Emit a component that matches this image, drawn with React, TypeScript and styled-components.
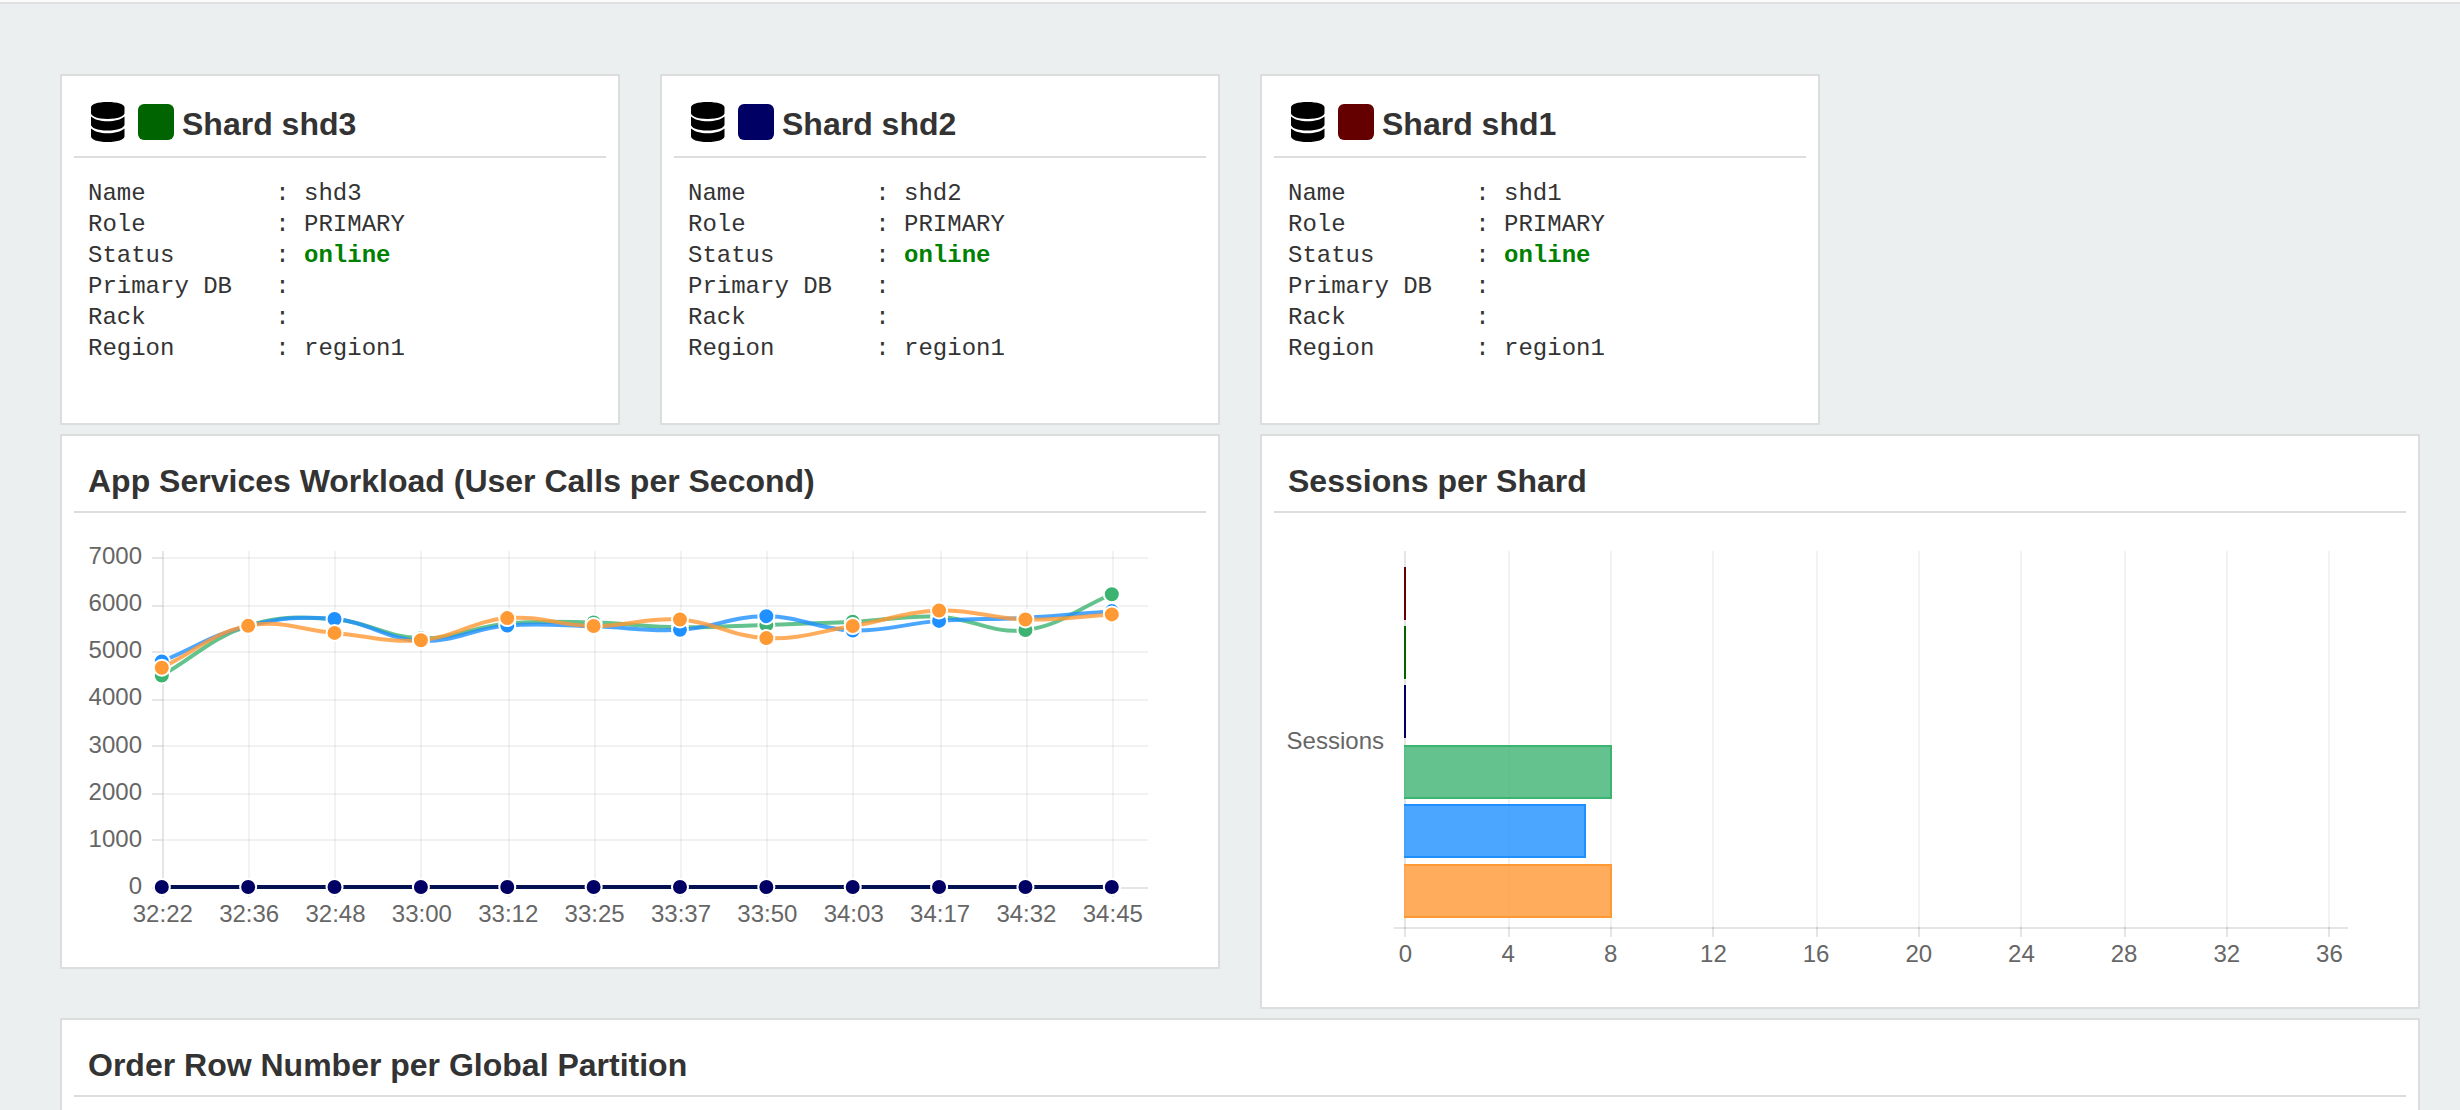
import React from "react";
import styled, { createGlobalStyle } from "styled-components";

const SANS = '"Liberation Sans", Arial, Helvetica, sans-serif';
const MONO = '"Liberation Mono", "Courier New", Courier, monospace';

const GlobalStyle = createGlobalStyle`
  *, *::before, *::after { box-sizing: border-box; }
  body { margin: 0; background: #ebeff0; color: #333; font-family: ${SANS}; }
`;

const Page = styled.div`
  height: 100vh;
  overflow-y: auto;
  scrollbar-width: none;
`;

const TopBar = styled.header`
  height: 4px;
  background: #fcfafa;
  border-bottom: 2px solid #e0e0e0;
`;

const Dashboard = styled.main`
  display: grid;
  grid-template-columns: repeat(4, minmax(0, 1fr));
  column-gap: 40px;
  row-gap: 9px;
  align-items: start;
  padding: 70px 40px 40px 60px;
`;

const Card = styled.section<{ $span: number; $newRow?: boolean }>`
  grid-column: ${(p) => (p.$newRow ? "1 / " : "")}span ${(p) => p.$span};
  padding: 12px;
  background: #fff;
  border: 2px solid #ddd;
`;

const CardHeader = styled.div<{ $tall?: boolean }>`
  display: flex;
  align-items: center;
  gap: 8px;
  height: ${(p) => (p.$tall ? 70 : 65)}px;
  padding: 0 14px;
  border-bottom: 2px solid #ddd;
`;

const Title = styled.h2`
  margin: 0;
  padding-top: 3px;
  font-size: 32px;
  line-height: 36px;
  font-weight: 700;
`;

const DbIcon = styled.svg`
  width: 40px;
  height: 40px;
  margin-right: 2px;
  fill: #000;
`;

const Swatch = styled.span<{ $color: string }>`
  width: 36px;
  height: 36px;
  border-radius: 6px;
  background: ${(p) => p.$color};
`;

const Details = styled.dl`
  margin: 20px 14px 47px;
  font-family: ${MONO};
  font-size: 24px;
  line-height: 31px;
`;

const DetailRow = styled.div`
  display: grid;
  grid-template-columns: 13ch 2ch 1fr;
  min-height: 31px;

  dd { margin: 0; }
`;

const Online = styled.strong`
  color: #008000;
`;

const Chart = styled.svg`
  display: block;
  width: 100%;
  height: auto;

  text {
    font-family: ${SANS};
    font-size: 24px;
    fill: #666;
  }
`;

const EmptyBody = styled.div`
  height: 442px;
`;

type Shard = { name: string; color: string };

const shards: Shard[] = [
  { name: "shd3", color: "#006400" },
  { name: "shd2", color: "#000064" },
  { name: "shd1", color: "#640000" },
];

function DatabaseIcon() {
  return (
    <DbIcon viewBox="0 0 40 40" aria-hidden="true">
      <path d="M3 5.500C3 2.200 9.500 0 19.500 0S36.500 2.200 36.500 5.500V11c0 3.400-6.800 5.900-17 5.900S3 14.400 3 11z" />
      <path d="M3 14.600c3.500 3.200 9.500 4.700 16.500 4.700s13.500-1.500 17-4.700v8c0 3.400-6.800 6-17 6S3 26 3 22.600z" />
      <path d="M3 26.500c3.500 3.200 9.500 4.700 16.500 4.700s13.500-1.500 17-4.700v7.700c0 3.400-6.800 5.800-17 5.800S3 37.600 3 34.200z" />
    </DbIcon>
  );
}

function ShardCard({ name, color }: Shard) {
  const rows: [string, React.ReactNode][] = [
    ["Name", name],
    ["Role", "PRIMARY"],
    ["Status", <Online>online</Online>],
    ["Primary DB", ""],
    ["Rack", ""],
    ["Region", "region1"],
  ];
  return (
    <Card $span={1}>
      <CardHeader $tall>
        <DatabaseIcon />
        <Swatch $color={color} />
        <Title>Shard {name}</Title>
      </CardHeader>
      <Details>
        {rows.map(([label, value]) => (
          <DetailRow key={label}>
            <dt>{label}</dt>
            <span>:</span>
            <dd>{value}</dd>
          </DetailRow>
        ))}
      </Details>
    </Card>
  );
}

type Point = { x: number; y: number };

/* Cubic spline through the points; tension 0.4, weighted by segment length. */
function splinePath(pts: Point[]) {
  const t = 0.4;
  const handles = pts.map((cur, i) => {
    const prev = pts[i - 1] ?? cur;
    const next = pts[i + 1] ?? cur;
    const a = Math.hypot(cur.x - prev.x, cur.y - prev.y);
    const b = Math.hypot(next.x - cur.x, next.y - cur.y);
    const fa = (t * a) / (a + b);
    const fb = (t * b) / (a + b);
    return {
      inX: cur.x - fa * (next.x - prev.x),
      inY: cur.y - fa * (next.y - prev.y),
      outX: cur.x + fb * (next.x - prev.x),
      outY: cur.y + fb * (next.y - prev.y),
    };
  });
  return pts
    .map((p, i) => {
      if (i === 0) return `M${p.x} ${p.y}`;
      const o = handles[i - 1];
      const n = handles[i];
      return `C${o.outX} ${o.outY} ${n.inX} ${n.inY} ${p.x} ${p.y}`;
    })
    .join("");
}

/* Centre of a 2px grid line, so that its edges fall on even pixels. */
const gridLine = (v: number) => 2 * Math.ceil((v - 1) / 2) + 1;

const times = ["32:22", "32:36", "32:48", "33:00", "33:12", "33:25", "33:37", "33:50", "34:03", "34:17", "34:32", "34:45"];
const zeros = times.map(() => 0);

const workload = [
  { color: "#640000", values: zeros },
  { color: "#006400", values: zeros },
  { color: "#000064", values: zeros },
  { color: "#3cb371", values: [4486, 5540, 5680, 5275, 5590, 5610, 5510, 5560, 5625, 5735, 5450, 6210] },
  { color: "#1e90ff", values: [4785, 5540, 5684, 5222, 5545, 5530, 5455, 5745, 5441, 5645, 5710, 5852] },
  { color: "#ff9933", values: [4652, 5540, 5390, 5235, 5704, 5535, 5675, 5280, 5535, 5865, 5675, 5782] },
];

function WorkloadChart() {
  const x = (i: number) => 87.8 + (i * 950) / 11;
  const y = (v: number) => 374 - (v * 330) / 7000;
  return (
    <Chart viewBox="0 0 1132 442" role="img" aria-label="User calls per second for each app service">
      {times.map((label, i) => {
        const gx = gridLine(x(i));
        return (
          <g key={label}>
            <path d={`M${gx} 38V374`} stroke="#000" strokeWidth={2} strokeOpacity={i ? 0.05 : 0.1} />
            <path d={`M${gx} 374V384`} stroke="#000" strokeWidth={2} strokeOpacity={0.1} />
            <text x={x(i) + 1} y={409} textAnchor="middle">{label}</text>
          </g>
        );
      })}
      {[0, 1000, 2000, 3000, 4000, 5000, 6000, 7000].map((v) => {
        const gy = gridLine(y(v));
        return (
          <g key={v}>
            <path d={`M78 ${gy}H88`} stroke="#000" strokeWidth={2} strokeOpacity={0.1} />
            <path d={`M88 ${gy}H1074`} stroke="#000" strokeWidth={2} strokeOpacity={v ? 0.05 : 0.1} />
            <text x={68} y={y(v) + 7} textAnchor="end">{v}</text>
          </g>
        );
      })}
      {workload.map(({ color, values }) => {
        const pts = values.map((v, i) => ({ x: x(i), y: y(v) }));
        return (
          <g key={color}>
            <path d={splinePath(pts)} fill="none" stroke={color} strokeOpacity={0.8} strokeWidth={4} />
            {pts.map((p) => (
              <circle key={p.x} cx={p.x} cy={p.y} r={8} fill={color} stroke="#fff" strokeWidth={2} />
            ))}
          </g>
        );
      })}
    </Chart>
  );
}

const sessions = [
  { color: "#640000", value: 0 },
  { color: "#006400", value: 0 },
  { color: "#000064", value: 0 },
  { color: "#3cb371", value: 8 },
  { color: "#1e90ff", value: 7 },
  { color: "#ff9933", value: 8 },
];

function SessionsChart() {
  const x = (v: number) => 130.4 + (v * 924) / 36;
  return (
    <Chart viewBox="0 0 1132 482" role="img" aria-label="Number of sessions for each shard">
      {[0, 4, 8, 12, 16, 20, 24, 28, 32, 36].map((v) => {
        const gx = gridLine(x(v));
        return (
          <g key={v}>
            <path d={`M${gx} 38V414`} stroke="#000" strokeWidth={2} strokeOpacity={v ? 0.05 : 0.1} />
            <path d={`M${gx} 414V424`} stroke="#000" strokeWidth={2} strokeOpacity={0.1} />
            <text x={x(v) + 1} y={449} textAnchor="middle">{v}</text>
          </g>
        );
      })}
      <path d="M120 415H1074" stroke="#000" strokeWidth={2} strokeOpacity={0.1} />
      <text x={110} y={236} textAnchor="end">Sessions</text>
      {sessions.map(({ color, value }, i) => {
        const top = 54 + Math.floor((i * 297) / 5);
        const right = Math.round(x(value));
        return value === 0 ? (
          <path key={color} d={`M131 ${top}v53`} stroke={color} strokeWidth={2} />
        ) : (
          <g key={color}>
            <rect x={130} y={top} width={right - 130 + 2} height={54} fill={color} fillOpacity={0.8} />
            <path d={`M130 ${top + 1}H${right + 1}v52H130`} fill="none" stroke={color} strokeWidth={2} />
          </g>
        );
      })}
    </Chart>
  );
}

export default function App() {
  return (
    <Page>
      <GlobalStyle />
      <TopBar />
      <Dashboard>
        {shards.map((s) => (
          <ShardCard key={s.name} {...s} />
        ))}
        <Card $span={2} $newRow>
          <CardHeader>
            <Title>App Services Workload (User Calls per Second)</Title>
          </CardHeader>
          <WorkloadChart />
        </Card>
        <Card $span={2}>
          <CardHeader>
            <Title>Sessions per Shard</Title>
          </CardHeader>
          <SessionsChart />
        </Card>
        <Card $span={4}>
          <CardHeader>
            <Title>Order Row Number per Global Partition</Title>
          </CardHeader>
          <EmptyBody />
        </Card>
      </Dashboard>
    </Page>
  );
}
